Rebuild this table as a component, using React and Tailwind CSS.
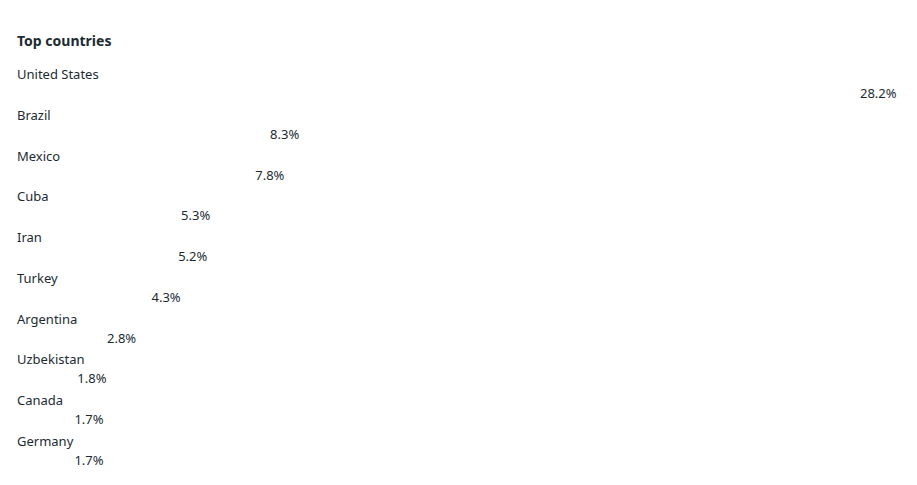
const countries = [
  { name: 'United States', pct: 28.2 },
  { name: 'Brazil', pct: 8.3 },
  { name: 'Mexico', pct: 7.8 },
  { name: 'Cuba', pct: 5.3 },
  { name: 'Iran', pct: 5.2 },
  { name: 'Turkey', pct: 4.3 },
  { name: 'Argentina', pct: 2.8 },
  { name: 'Uzbekistan', pct: 1.8 },
  { name: 'Canada', pct: 1.7 },
  { name: 'Germany', pct: 1.7 },
];

const max = 28.2;

export default function App() {
  return (
    <div
      className="w-[917px] h-[485px] bg-white overflow-hidden pl-[17px] pr-[20px] pt-[31px] text-[#1c2b33]"
      style={{ fontFamily: '"Noto Sans", "Liberation Sans", sans-serif' }}
    >
      <h2 className="text-[14px] leading-[20px] font-bold">Top countries</h2>
      <div className="mt-[14px] flex flex-col">
        {countries.map((c) => (
          <div key={c.name} className="mb-[2.85px]">
            <div className="text-[13px] leading-[19px]">{c.name}</div>
            {/* bar is invisible here, only the value sits at its end */}
            <div className="flex pl-[7px] text-[13px] leading-[18.9px]">
              <div className="shrink-0" style={{ width: `calc((100% - 37px) * ${c.pct / max})` }} />
              <span className="whitespace-nowrap">{c.pct}%</span>
            </div>
          </div>
        ))}
      </div>
    </div>
  );
}
